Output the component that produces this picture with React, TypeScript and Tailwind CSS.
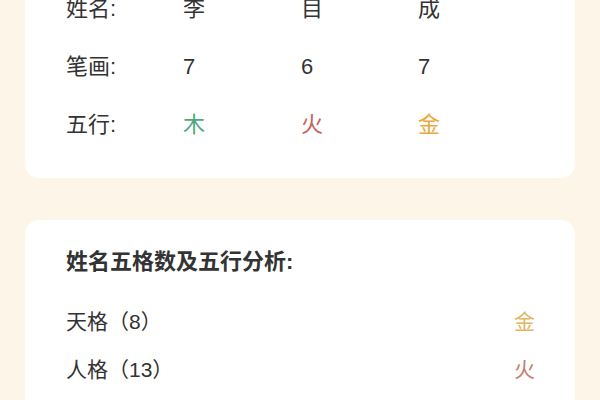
import React from 'react';

const cjk = { fontFamily: '"Liberation Sans", "Noto Sans CJK SC", sans-serif' };

const rows = [
  { label: '姓名:', values: ['李', '目', '成'], colors: ['text-[#333333]', 'text-[#333333]', 'text-[#333333]'] },
  { label: '笔画:', values: ['7', '6', '7'], colors: ['text-[#333333]', 'text-[#333333]', 'text-[#333333]'] },
  { label: '五行:', values: ['木', '火', '金'], colors: ['text-[#4fa67e]', 'text-[#c8625c]', 'text-[#e9a93c]'] },
];

const grids = [
  { label: '天格（8）', wx: '金', color: 'text-[#e2b762]' },
  { label: '人格（13）', wx: '火', color: 'text-[#c47d70]' },
];

export default function App() {
  return (
    <div style={cjk} className="h-[400px] w-[600px] overflow-hidden bg-[#fdf5e7] px-[25px] text-[#333333]">
      {/* Name / strokes / five elements */}
      <div className="-mt-[40px] rounded-[14px] bg-white pl-[41px] pr-[40px] pt-[19px] pb-[25px]">
        {rows.map((r) => (
          <div key={r.label} className="grid h-[58px] grid-cols-[117px_118px_117px_1fr] items-center text-[22px]">
            <span>{r.label}</span>
            {r.values.map((v, i) => (
              <span key={i} className={r.colors[i]}>{v}</span>
            ))}
          </div>
        ))}
      </div>

      {/* Five grids analysis */}
      <div className="mt-[42px] rounded-[14px] bg-white pl-[41px] pr-[40px] pt-[27px] pb-[20px]">
        <h2 className="text-[22px] font-semibold leading-[30px]">姓名五格数及五行分析:</h2>
        <div className="mt-[21px]">
          {grids.map((g) => (
            <div key={g.label} className="flex h-[48px] items-center justify-between text-[21px]">
              <span>{g.label}</span>
              <span className={g.color}>{g.wx}</span>
            </div>
          ))}
        </div>
      </div>
    </div>
  );
}
